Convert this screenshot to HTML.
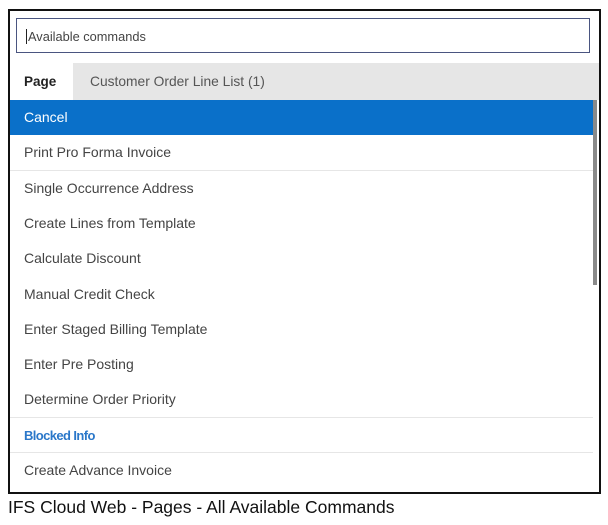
<!DOCTYPE html>
<html><head><style>
body{margin:0;background:#fff;width:608px;height:525px;position:relative;overflow:hidden;font-family:"Liberation Sans",sans-serif}
.frame{position:absolute;left:8px;top:9px;width:589px;height:481px;border:2px solid #111;background:#fff}
.inp{position:absolute;left:6px;top:7px;width:574px;height:35px;border:1px solid #4a5580;font-size:12.8px;color:#444;line-height:35px;padding-left:9px;box-sizing:border-box}
.inp span{border-left:1px solid #222;padding-left:1px}
.tabs{position:absolute;left:0;top:52px;width:589px;height:37px;background:#e6e6e6;font-size:13.8px;line-height:37px}
.tabs .p{position:absolute;left:0;top:0;width:63px;height:37px;background:#fff;font-weight:bold;color:#222;text-indent:14px;font-size:13.5px}
.tabs .c{position:absolute;left:80px;color:#555}
.row{position:absolute;left:0;width:583px;height:35.3px;line-height:35px;font-size:14px;color:#444;text-indent:14px;box-sizing:border-box}
.sel{background:#0a70c9;color:#fff;width:584px}
.b{color:#2a77c9;font-weight:bold;font-size:13px;letter-spacing:-0.6px}
.sep{border-bottom:1px solid #e6e6e6}
.sb{position:absolute;left:583px;top:89px;width:4px;height:185px;background:#8a8a8a}
.cap{position:absolute;left:8px;top:497px;font-size:17.5px;color:#111}
</style></head><body>
<div class="frame">
<div class="inp"><span>Available commands</span></div>
<div class="tabs"><div class="p">Page</div><div class="c">Customer Order Line List (1)</div></div>
<div class="row sel" style="top:89px">Cancel</div>
<div class="row sep" style="top:124.3px">Print Pro Forma Invoice</div>
<div class="row" style="top:159.6px">Single Occurrence Address</div>
<div class="row" style="top:194.9px">Create Lines from Template</div>
<div class="row" style="top:230.2px">Calculate Discount</div>
<div class="row" style="top:265.5px">Manual Credit Check</div>
<div class="row" style="top:300.8px">Enter Staged Billing Template</div>
<div class="row" style="top:336.1px">Enter Pre Posting</div>
<div class="row sep" style="top:371.4px">Determine Order Priority</div>
<div class="row sep b" style="top:406.7px">Blocked Info</div>
<div class="row" style="top:442px">Create Advance Invoice</div>
<div class="sb"></div>
</div>
<div class="cap">IFS Cloud Web - Pages - All Available Commands</div>
</body></html>
